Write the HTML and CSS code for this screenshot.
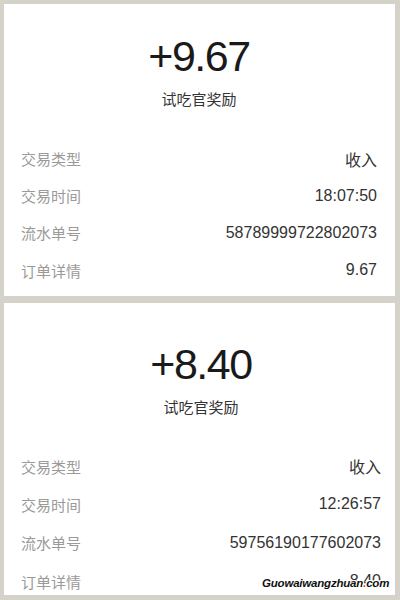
FILE: index.html
```html
<!DOCTYPE html>
<html lang="zh-CN">
<head>
    <meta charset="UTF-8">
    <meta name="viewport" content="width=device-width, initial-scale=1.0">
    <title>收支明细</title>
    <link rel="stylesheet" href="styles.css">
</head>
<body>
    <div class="page">
        <!-- First record -->
        <div class="card">
            <div class="amount">+9.67</div>
            <div class="title">试吃官奖励</div>
            <div class="rows">
                <div class="row"><span class="label">交易类型</span><span class="value">收入</span></div>
                <div class="row"><span class="label">交易时间</span><span class="value">18:07:50</span></div>
                <div class="row"><span class="label">流水单号</span><span class="value">58789999722802073</span></div>
                <div class="row"><span class="label">订单详情</span><span class="value">9.67</span></div>
            </div>
        </div>

        <!-- Second record -->
        <div class="card card-second">
            <div class="amount">+8.40</div>
            <div class="title">试吃官奖励</div>
            <div class="rows">
                <div class="row"><span class="label">交易类型</span><span class="value">收入</span></div>
                <div class="row"><span class="label">交易时间</span><span class="value">12:26:57</span></div>
                <div class="row"><span class="label">流水单号</span><span class="value">59756190177602073</span></div>
                <div class="row"><span class="label">订单详情</span><span class="value">8.40</span></div>
            </div>
        </div>
    </div>

    <!-- Site watermark -->
    <div class="watermark">Guowaiwangzhuan<span class="dot">.</span>com</div>
</body>
</html>
```

FILE: styles.css
```css
/* Page background */
body {
    margin: 0;
    background: #d5d3c9;
    font-family: "Liberation Sans", "Noto Sans CJK SC", sans-serif;
}

.page {
    padding: 4px 5px 5px 4px;
    display: flex;
    flex-direction: column;
    gap: 7px;
}

/* White record card */
.card {
    background: #ffffff;
    height: 292px;
    box-sizing: border-box;
    padding: 28px 18px 0 17px;
    overflow: hidden;
}

.card-second {
    padding-top: 37px;
    padding-right: 14px;
}

/* Big amount and its title */
.amount {
    font-size: 43px;
    line-height: 48px;
    letter-spacing: -1.5px;
    text-align: center;
    color: #1a1a1a;
}

.title {
    margin-top: 9px;
    font-family: "Noto Sans CJK SC", sans-serif;
    font-size: 15px;
    line-height: 20px;
    text-align: center;
    color: #333;
}

/* Detail rows */
.rows {
    margin-top: 31px;
}

.card-second .rows {
    margin-top: 30px;
}

.row {
    height: 37.2px;
    display: flex;
    justify-content: space-between;
    align-items: center;
}

.card-second .row {
    height: 38.3px;
}

.label {
    font-family: "Noto Sans CJK SC", sans-serif;
    font-size: 15px;
    color: #9a9a9a;
}

.value {
    font-size: 16px;
    color: #333;
}

.row .value:first-child,
.value {
    font-family: "Liberation Sans", "Noto Sans CJK SC", sans-serif;
}

/* Watermark in the corner */
.watermark {
    position: absolute;
    left: 262px;
    top: 577px;
    font-family: "Liberation Sans", sans-serif;
    font-size: 11.5px;
    font-weight: bold;
    font-style: italic;
    letter-spacing: -0.2px;
    color: #111;
    text-shadow: 1px 0 0 #fff, -1px 0 0 #fff, 0 1px 0 #fff, 0 -1px 0 #fff,
        1px 1px 0 #fff, -1px -1px 0 #fff, 1px -1px 0 #fff, -1px 1px 0 #fff;
}

.watermark .dot {
    color: #e23a2a;
}
```
